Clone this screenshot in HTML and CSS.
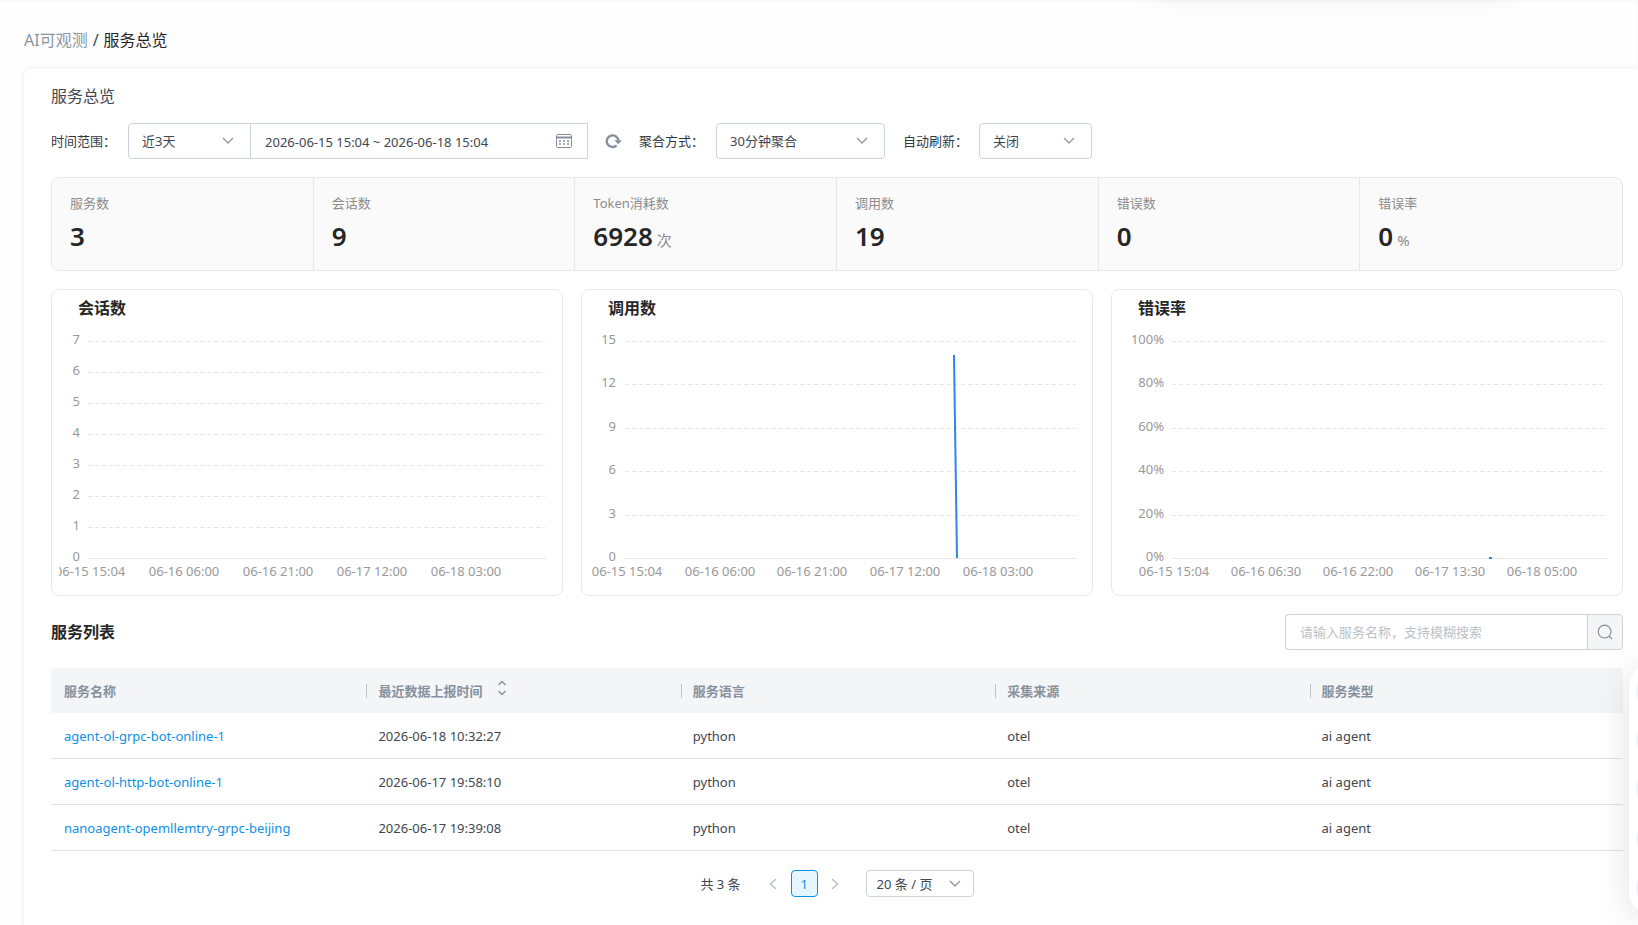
FILE: index.html
```html
<!DOCTYPE html>
<html lang="zh-CN">
<head>
	<meta charset="UTF-8">
	<meta name="viewport" content="width=device-width, initial-scale=1.0">
	<title>服务总览</title>
	<link rel="stylesheet" href="styles.css">
</head>
<body>

<div class="top-popup"></div>

<nav class="breadcrumb">
	<a href="#">AI可观测</a>
	<span class="slash">/</span>
	<span class="current">服务总览</span>
</nav>

<main class="panel">
	<h1>服务总览</h1>

	<form class="filters">
		<label for="range">时间范围：</label>
		<div class="range-group">
			<select id="range" class="range-select"><option>近3天</option></select>
			<div class="date-box">
				<input type="text" class="date-input" aria-label="时间" value="2026-06-15 15:04 ~ 2026-06-18 15:04">
				<svg width="18" height="16" viewBox="0 0 18 16" fill="none" stroke="#84909c">
					<rect x="1.5" y="1.5" width="15" height="13" rx="1"/>
					<path d="M1 4.5h16" stroke-width="2"/>
					<path d="M4 8h2M8 8h2M12 8h2M4 11h2M8 11h2M12 11h2" stroke-width="1.4"/>
				</svg>
			</div>
		</div>
		<button type="button" class="refresh" aria-label="刷新">
			<svg width="18" height="16" viewBox="0 0 18 16" fill="none" stroke="#84909c" stroke-width="2.4">
				<path d="M11.6 12.4A5.8 5.8 0 1 1 13.4 8"/>
				<path d="M9.4 7.2h7.6L13.2 11.2z" fill="#84909c" stroke="none"/>
			</svg>
		</button>
		<label for="agg">聚合方式：</label>
		<select id="agg" class="agg-select"><option>30分钟聚合</option></select>
		<label for="auto">自动刷新：</label>
		<select id="auto" class="auto-select"><option>关闭</option></select>
	</form>

	<section class="stats">
		<div class="stat"><div class="stat-name">服务数</div><div class="stat-value">3</div></div>
		<div class="stat"><div class="stat-name">会话数</div><div class="stat-value">9</div></div>
		<div class="stat"><div class="stat-name">Token消耗数</div><div class="stat-value">6928<span class="unit">次</span></div></div>
		<div class="stat"><div class="stat-name">调用数</div><div class="stat-value">19</div></div>
		<div class="stat"><div class="stat-name">错误数</div><div class="stat-value">0</div></div>
		<div class="stat"><div class="stat-name">错误率</div><div class="stat-value">0<span class="unit">%</span></div></div>
	</section>

	<section class="charts">
		<div class="chart">
			<h3>会话数</h3>
			<svg viewBox="0 0 496 268">
				<path class="grid" d="M29 14H486M29 45H486M29 76H486M29 107H486M29 138H486M29 169H486M29 200H486"/>
				<path class="axis" d="M29 231H487"/>
				<g class="y-labels">
					<text x="21" y="17">7</text>
					<text x="21" y="48">6</text>
					<text x="21" y="79">5</text>
					<text x="21" y="110">4</text>
					<text x="21" y="141">3</text>
					<text x="21" y="172">2</text>
					<text x="21" y="203">1</text>
					<text x="21" y="234">0</text>
				</g>
				<g class="x-labels">
					<text x="31" y="249">06-15 15:04</text>
					<text x="125" y="249">06-16 06:00</text>
					<text x="219" y="249">06-16 21:00</text>
					<text x="313" y="249">06-17 12:00</text>
					<text x="407" y="249">06-18 03:00</text>
				</g>
			</svg>
		</div>
		<div class="chart">
			<h3>调用数</h3>
			<svg viewBox="0 0 496 268">
				<path class="grid" d="M36 14H487M36 57H487M36 101H487M36 144H487M36 188H487"/>
				<path class="axis" d="M36 231H488"/>
				<g class="y-labels">
					<text x="27" y="17">15</text>
					<text x="27" y="60">12</text>
					<text x="27" y="104">9</text>
					<text x="27" y="147">6</text>
					<text x="27" y="191">3</text>
					<text x="27" y="234">0</text>
				</g>
				<g class="x-labels">
					<text x="38" y="249">06-15 15:04</text>
					<text x="131" y="249">06-16 06:00</text>
					<text x="223" y="249">06-16 21:00</text>
					<text x="316" y="249">06-17 12:00</text>
					<text x="409" y="249">06-18 03:00</text>
				</g>
				<path class="series" d="M365 28L368 231"/>
			</svg>
		</div>
		<div class="chart">
			<h3>错误率</h3>
			<svg viewBox="0 0 496 268">
				<path class="grid" d="M53 14H488M53 57H488M53 101H488M53 144H488M53 188H488"/>
				<path class="axis" d="M53 231H488"/>
				<g class="y-labels">
					<text x="45" y="17">100%</text>
					<text x="45" y="60">80%</text>
					<text x="45" y="104">60%</text>
					<text x="45" y="147">40%</text>
					<text x="45" y="191">20%</text>
					<text x="45" y="234">0%</text>
				</g>
				<g class="x-labels">
					<text x="55" y="249">06-15 15:04</text>
					<text x="147" y="249">06-16 06:30</text>
					<text x="239" y="249">06-16 22:00</text>
					<text x="331" y="249">06-17 13:30</text>
					<text x="423" y="249">06-18 05:00</text>
				</g>
				<path class="series" d="M370 231h3"/>
			</svg>
		</div>
	</section>

	<div class="list-head">
		<h2>服务列表</h2>
		<form class="search">
			<input type="text" aria-label="服务名称" placeholder="请输入服务名称，支持模糊搜索">
			<button type="button" aria-label="搜索">
				<svg width="16" height="16" viewBox="0 0 16 16" fill="none" stroke="#84909c" stroke-width="1.2">
					<circle cx="7.6" cy="7.6" r="6.4"/>
					<path d="M12 12l3 3"/>
				</svg>
			</button>
		</form>
	</div>

	<table class="services">
		<thead>
			<tr>
				<th>服务名称</th>
				<th>最近数据上报时间
					<svg class="sort" width="10" height="16" viewBox="0 0 10 16" fill="none" stroke="#84909c" stroke-width="1.4">
						<path d="M1.5 5L5 1.5L8.5 5M1.5 11L5 14.5L8.5 11"/>
					</svg>
				</th>
				<th>服务语言</th>
				<th>采集来源</th>
				<th>服务类型</th>
			</tr>
		</thead>
		<tbody>
			<tr>
				<td><a href="#">agent-ol-grpc-bot-online-1</a></td>
				<td>2026-06-18 10:32:27</td>
				<td>python</td>
				<td>otel</td>
				<td>ai agent</td>
			</tr>
			<tr>
				<td><a href="#">agent-ol-http-bot-online-1</a></td>
				<td>2026-06-17 19:58:10</td>
				<td>python</td>
				<td>otel</td>
				<td>ai agent</td>
			</tr>
			<tr>
				<td><a href="#">nanoagent-opemllemtry-grpc-beijing</a></td>
				<td>2026-06-17 19:39:08</td>
				<td>python</td>
				<td>otel</td>
				<td>ai agent</td>
			</tr>
		</tbody>
	</table>

	<div class="pager">
		<span class="total">共 3 条</span>
		<button type="button" class="arrow" aria-label="上一页">
			<svg width="8" height="12" viewBox="0 0 8 12"><path d="M7 1L1.5 6L7 11"/></svg>
		</button>
		<button type="button" class="page">1</button>
		<button type="button" class="arrow" aria-label="下一页">
			<svg width="8" height="12" viewBox="0 0 8 12"><path d="M1 1L6.5 6L1 11"/></svg>
		</button>
		<select class="size-select" aria-label="每页条数"><option>20 条 / 页</option></select>
	</div>
</main>

<!-- toolbar docked at the right edge -->
<aside class="dock">
	<i></i><i></i><i></i><i></i><i></i>
</aside>

</body>
</html>
```
FILE: styles.css
```css
* {
	box-sizing: border-box;
}

body {
	margin: 0;
	min-height: 100vh;
	display: flex;
	flex-direction: column;
	overflow: hidden;
	font-family: "Noto Sans", "Noto Sans CJK SC", sans-serif;
	font-size: 13px;
	line-height: 20px;
	color: #41464f;
	background: #fefefe;
	box-shadow: inset 0 1px 2px #f7f7f7;
}

h1, h2, h3 {
	margin: 0;
	font-size: 16px;
	line-height: 24px;
}

a {
	color: #0d8fe8;
	text-decoration: none;
}

input, select, button {
	font: inherit;
	color: inherit;
	margin: 0;
}

button {
	padding: 0;
	border: none;
	background: none;
}

svg {
	display: block;
}

/* popup hidden above the page, only its shadow shows */
.top-popup {
	position: absolute;
	top: -44px;
	left: 1150px;
	width: 360px;
	height: 40px;
	box-shadow: 0 0 24px rgba(0, 0, 0, .08);
}

.breadcrumb {
	display: flex;
	gap: 5px;
	padding: 28px 24px 17px;
	font-size: 16px;
	line-height: 24px;
}
.breadcrumb a { color: #8a95a1; }
.breadcrumb .current { color: #1f2329; }

.panel {
	flex: 1;
	margin-left: 24px;
	padding: 15px 15px 27px 27px;
	border-radius: 8px 0 0 0;
	background: #fff;
	box-shadow: 0 0 6px rgba(0, 0, 0, .08);
}

h1 {
	font-weight: 400;
}

/* filters */

.filters {
	display: flex;
	align-items: center;
	margin-top: 15px;
}
.filters label { color: #33383f; }

select {
	appearance: none;
	height: 36px;
	padding: 0 13px;
	border: 1px solid #cdd3d9;
	border-radius: 4px;
	background: #fff url("data:image/svg+xml,%3Csvg xmlns='http://www.w3.org/2000/svg' width='12' height='8' fill='none' stroke='%238c98a4' stroke-width='1.3'%3E%3Cpath d='M1 1l5 5 5-5'/%3E%3C/svg%3E") no-repeat right 16px center;
}

.range-group {
	display: flex;
	margin-left: 12px;
}
.range-select {
	width: 123px;
	border-radius: 4px 0 0 4px;
}
.date-box {
	display: flex;
	align-items: center;
	width: 338px;
	height: 36px;
	margin-left: -1px;
	padding: 0 14px;
	border: 1px solid #cdd3d9;
}
.date-input {
	flex: 1;
	border: none;
	padding: 2px 0 0;
	background: none;
}
.refresh { margin: 0 16px 0 17px; }
.agg-select {
	width: 169px;
	margin: 0 18px 0 12px;
}
.auto-select {
	width: 113px;
	margin-left: 11px;
}

/* summary numbers */

.stats {
	display: grid;
	grid-template-columns: repeat(6, 1fr);
	margin-top: 18px;
	border: 1px solid #e8e8e8;
	border-radius: 8px;
	background: #fafafa;
}
.stat {
	padding: 15px 18px 16px;
}
.stat:not(:last-child) {
	border-right: 1px solid #e8e8e8;
}
.stat-name {
	color: #8c8c8c;
}
.stat-value {
	margin-top: 5px;
	font-size: 26px;
	font-weight: 600;
	line-height: 36px;
	color: #262626;
}
.unit {
	margin-left: 4px;
	font-size: 15px;
	font-weight: 400;
	line-height: 1;
	color: #8c8c8c;
}

/* charts */

.charts {
	display: grid;
	grid-template-columns: repeat(3, 1fr);
	gap: 18px;
	margin-top: 18px;
}
.chart {
	padding: 0 7px;
	border: 1px solid #e8e8e8;
	border-radius: 8px;
}
.chart h3 {
	padding-left: 19px;
	line-height: 37px;
	color: #262626;
}
.chart svg { width: 100%; }
.chart text {
	font-size: 13px;
	fill: #999;
}
.y-labels { text-anchor: end; }
.x-labels { text-anchor: middle; }
.grid, .axis {
	stroke: #e6e6e6;
	shape-rendering: crispEdges;
}
.grid { stroke-dasharray: 4 3; }
.series {
	fill: none;
	stroke: #2f86ea;
	stroke-width: 2;
}

/* service list */

.list-head {
	display: flex;
	align-items: center;
	justify-content: space-between;
	margin: 18px 0;
}
h2 { color: #262626; }

.search { display: flex; }
.search input {
	width: 302px;
	height: 36px;
	padding: 0 14px;
	border: 1px solid #cdd3d9;
	border-right: none;
	border-radius: 4px 0 0 4px;
	background: #fff;
}
.search input::placeholder { color: #bcc2c8; }
.search button {
	display: flex;
	align-items: center;
	justify-content: center;
	width: 36px;
	border: 1px solid #cdd3d9;
	border-radius: 0 4px 4px 0;
	background: #f3f5f7;
}

.services {
	width: 100%;
	table-layout: fixed;
	border-collapse: separate;
	border-spacing: 0;
}
.services th {
	height: 45px;
	padding: 0 13px;
	text-align: left;
	color: #87919d;
	background: linear-gradient(#bcc3ca, #bcc3ca) no-repeat 1px center / 1px 14px #f3f5f7;
}
.services th:first-child {
	background: #f3f5f7;
	border-radius: 4px 0 0 0;
}
.services th:last-child { border-radius: 0 4px 0 0; }
.services td {
	height: 46px;
	padding: 0 13px;
	border-bottom: 1px solid #dfe2e6;
}
.sort {
	display: inline-block;
	margin-left: 11px;
}

.pager {
	display: flex;
	align-items: center;
	justify-content: center;
	margin-top: 19px;
}
.total { margin-right: 19px; }
.arrow {
	display: flex;
	align-items: center;
	justify-content: center;
	width: 27px;
	height: 27px;
}
.arrow path {
	fill: none;
	stroke: #b8bec5;
	stroke-width: 1.4;
}
.page {
	width: 27px;
	height: 27px;
	margin: 0 4px;
	border: 1px solid #0d8fe8;
	border-radius: 4px;
	color: #0d8fe8;
	background: #e6f6ff;
}
.size-select {
	width: 108px;
	height: 27px;
	margin-left: 17px;
	padding: 0 10px;
	background-position: right 12px center;
}

.dock {
	position: fixed;
	right: -48px;
	bottom: 12px;
	display: flex;
	flex-direction: column;
	justify-content: space-around;
	width: 57px;
	height: 247px;
	padding-left: 7px;
	border-radius: 20px;
	background: #fff;
	box-shadow: 0 4px 36px rgba(0, 0, 0, .12);
}
.dock i {
	width: 36px;
	height: 36px;
	border-radius: 50%;
	background: #f3f4f9;
}
```
